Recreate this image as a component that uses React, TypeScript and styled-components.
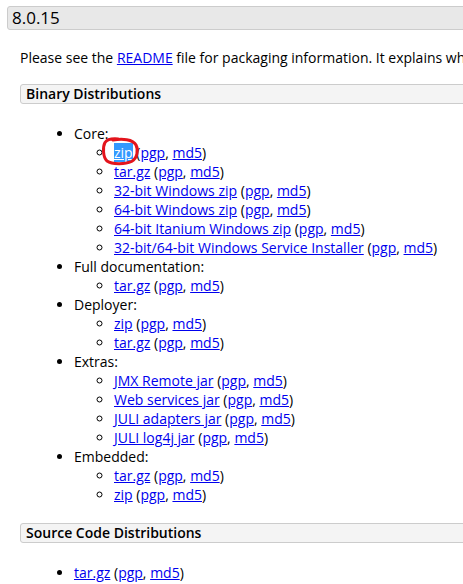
import styled, { createGlobalStyle } from 'styled-components';

const GlobalStyle = createGlobalStyle`
  html, body {
    margin: 0;
    padding: 0;
    background: #fff;
    overflow: hidden;
  }
  body {
    font-family: 'Open Sans', 'Liberation Sans', sans-serif;
    font-size: 14px;
    color: #000;
  }
`;

type Group = { label: string; files: string[] };

const binaryGroups: Group[] = [
  {
    label: 'Core:',
    files: [
      'zip',
      'tar.gz',
      '32-bit Windows zip',
      '64-bit Windows zip',
      '64-bit Itanium Windows zip',
      '32-bit/64-bit Windows Service Installer',
    ],
  },
  { label: 'Full documentation:', files: ['tar.gz'] },
  { label: 'Deployer:', files: ['zip', 'tar.gz'] },
  { label: 'Extras:', files: ['JMX Remote jar', 'Web services jar', 'JULI adapters jar', 'JULI log4j jar'] },
  { label: 'Embedded:', files: ['tar.gz', 'zip'] },
];

const Page = styled.div`
  width: 1000px;
  padding: 6px 0 0 7px;
`;

const VersionTitle = styled.h3`
  margin: 0;
  padding: 0 4px;
  height: 22px;
  line-height: 22px;
  font-size: 17px;
  font-weight: 400;
  background: #e8e8e8;
  border: 1px solid #ccc;
  border-radius: 3px;
`;

const Section = styled.div`
  padding-left: 13px;
`;

const Intro = styled.p`
  margin: 18px 0 17px;
  line-height: 19px;
  white-space: nowrap;
`;

const SectionTitle = styled.h4`
  margin: 0;
  padding: 0 5px;
  height: 18px;
  line-height: 18px;
  font-size: 14px;
  font-weight: 600;
  background: #f4f4f4;
  border: 1px solid #ccc;
  border-radius: 3px;
`;

const DownloadList = styled.ul`
  margin: 20px 0 19px;
  padding-left: 54px;
  line-height: 19px;
  list-style: disc;
`;

const FileList = styled.ul`
  margin: 0;
  padding-left: 40px;
  list-style: circle;
`;

const Link = styled.a<{ $selected?: boolean }>`
  text-decoration: underline;
  background: ${p => (p.$selected ? '#3399ff' : 'transparent')};
  color: ${p => (p.$selected ? '#fff' : '#0000ee')};
`;

const Marked = styled.span`
  position: relative;
`;

// hand-drawn loop around the highlighted link
const Ring = styled.svg`
  position: absolute;
  left: -13px;
  top: -8px;
  width: 40px;
  height: 32px;
  overflow: visible;
  pointer-events: none;
`;

const FileEntry = ({ name, circled }: { name: string; circled?: boolean }) => (
  <li>
    {circled ? (
      <Marked>
        <Link href="#" $selected>{name}</Link>
        <Ring viewBox="0 0 40 32">
          <path
            d="M12 5 C21 3.5 32 4 35 10 C37.5 15 36.5 23 30.5 26.5 C24 29.5 11 29.5 6 26 C2 22.5 1.5 12 4 7.5 C6 4.5 11 3.5 17 4"
            fill="none"
            stroke="#e3141c"
            strokeWidth="3"
            strokeLinecap="round"
          />
        </Ring>
      </Marked>
    ) : (
      <Link href="#">{name}</Link>
    )}{' '}
    (<Link href="#">pgp</Link>, <Link href="#">md5</Link>)
  </li>
);

export default function App() {
  return (
    <>
      <GlobalStyle />
      <Page>
        <VersionTitle>8.0.15</VersionTitle>
        <Section>
          <Intro>
            Please see the <Link href="#">README</Link> file for packaging information. It explains what
            every distribution contains.
          </Intro>
          <SectionTitle>Binary Distributions</SectionTitle>
          <DownloadList>
            {binaryGroups.map((group, gi) => (
              <li key={group.label}>
                {group.label}
                <FileList>
                  {group.files.map((file, fi) => (
                    <FileEntry key={file} name={file} circled={gi === 0 && fi === 0} />
                  ))}
                </FileList>
              </li>
            ))}
          </DownloadList>
          <SectionTitle>Source Code Distributions</SectionTitle>
          <DownloadList>
            <FileEntry name="tar.gz" />
          </DownloadList>
        </Section>
      </Page>
    </>
  );
}
